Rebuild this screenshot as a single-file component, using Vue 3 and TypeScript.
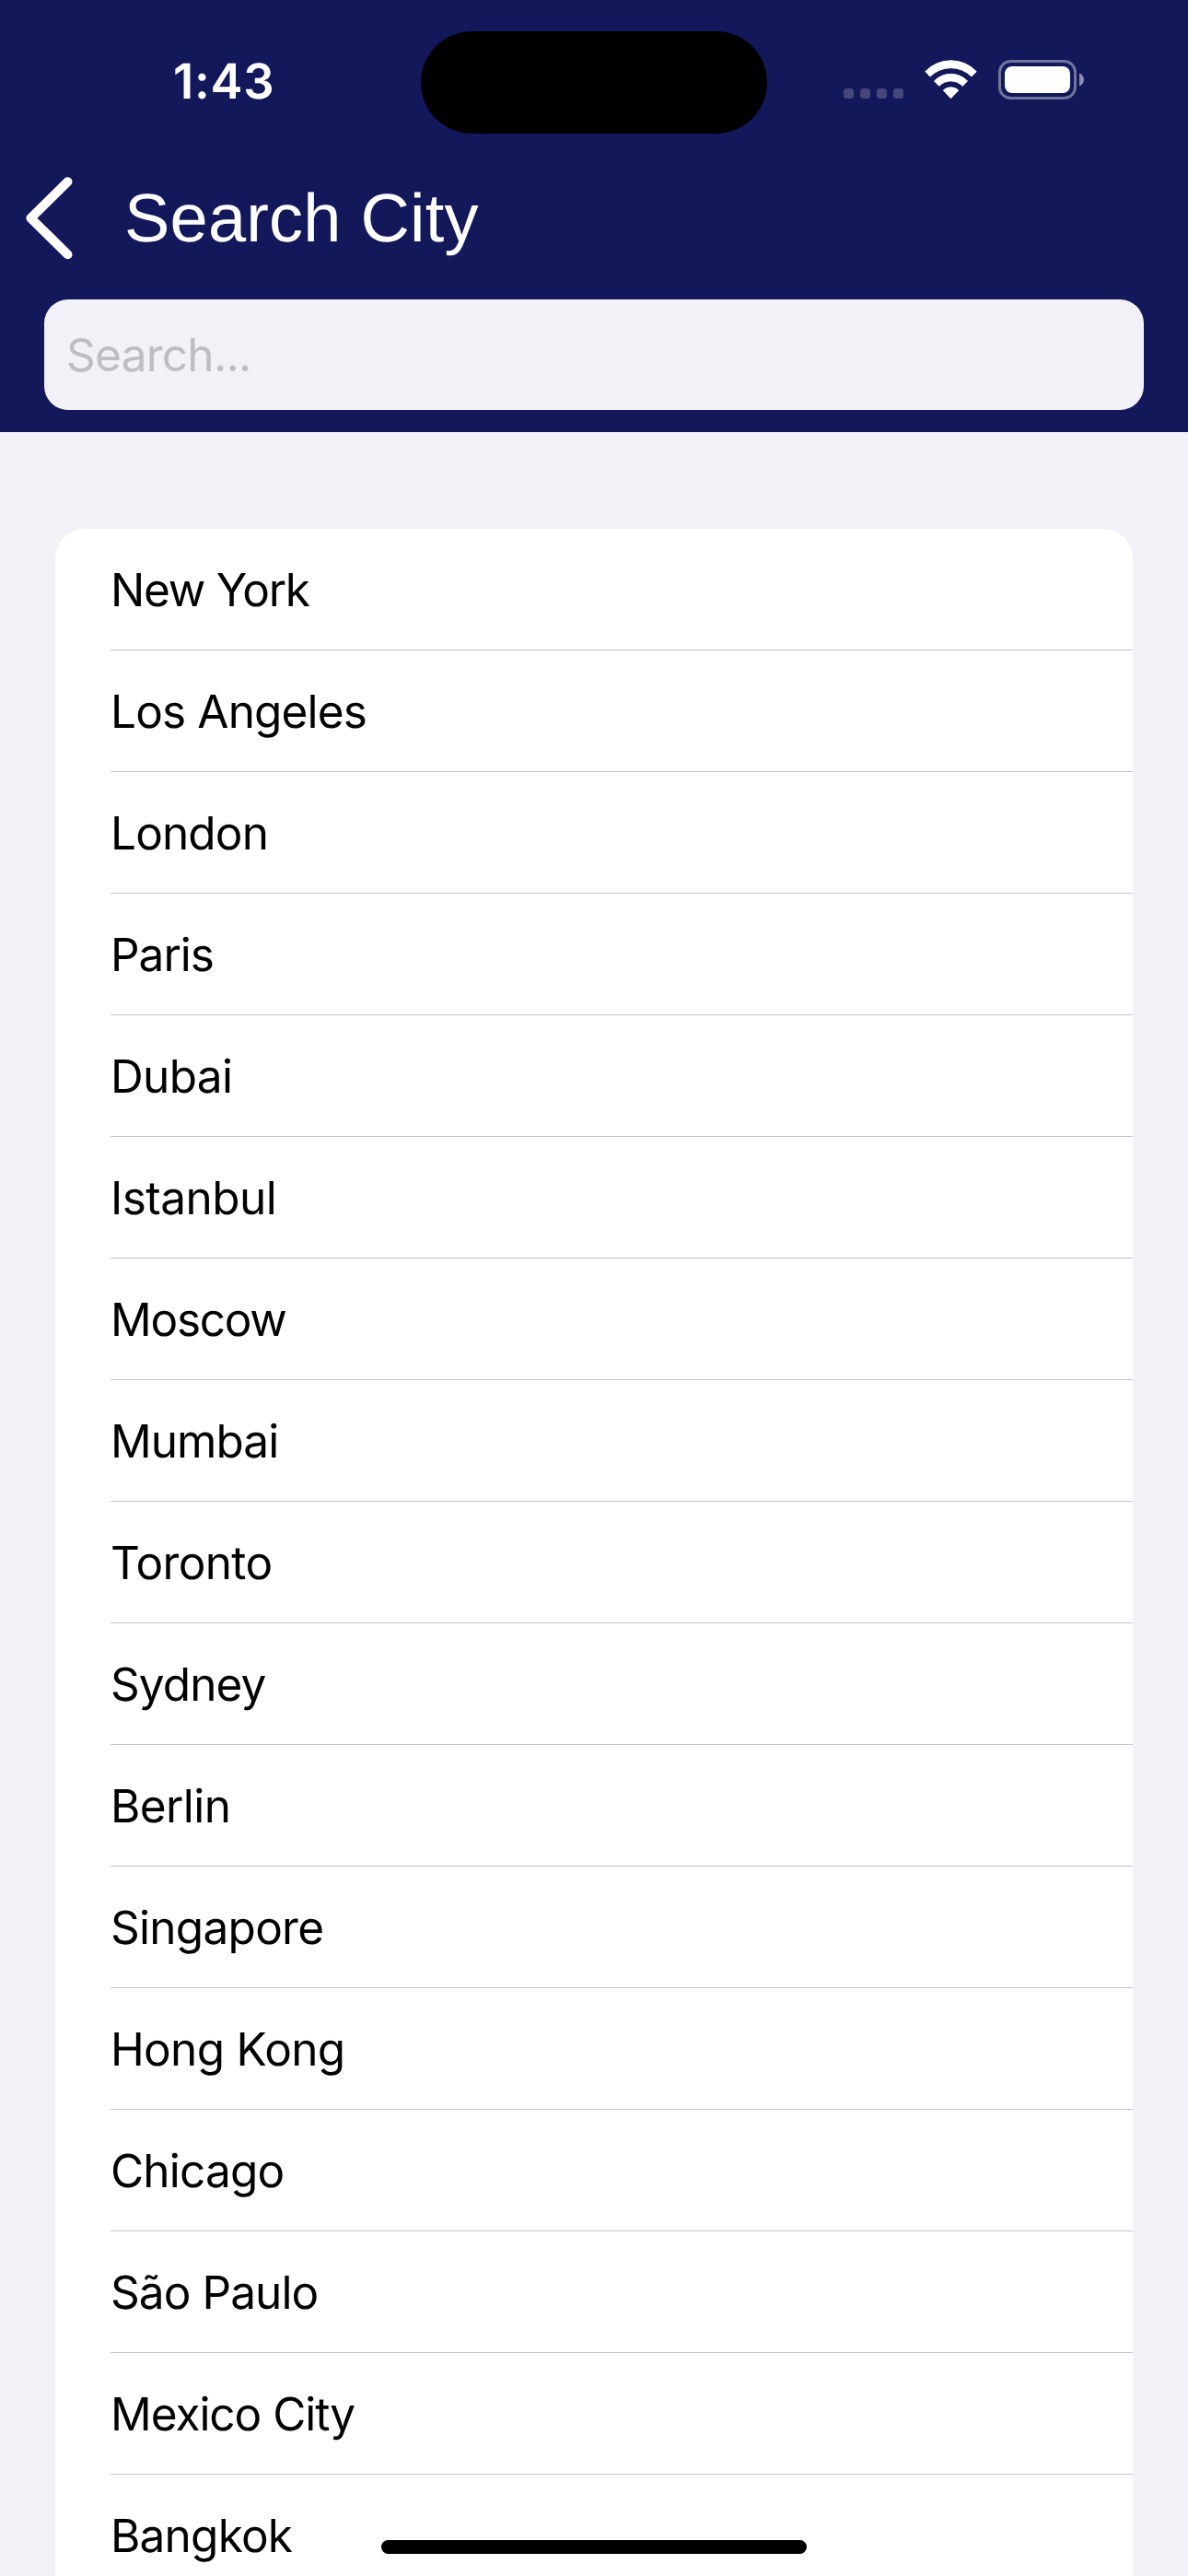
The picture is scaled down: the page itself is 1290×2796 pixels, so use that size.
<script setup lang="ts">
import { ref, computed } from 'vue'

interface City {
  name: string
  tracking: number
}

const query = ref('')

const cities: City[] = [
  { name: 'New York', tracking: -1.25 },
  { name: 'Los Angeles', tracking: -0.84 },
  { name: 'London', tracking: -0.85 },
  { name: 'Paris', tracking: -1 },
  { name: 'Dubai', tracking: -0.65 },
  { name: 'Istanbul', tracking: -0.53 },
  { name: 'Moscow', tracking: -1.25 },
  { name: 'Mumbai', tracking: -0.95 },
  { name: 'Toronto', tracking: -0.64 },
  { name: 'Sydney', tracking: -0.9 },
  { name: 'Berlin', tracking: -0.6 },
  { name: 'Singapore', tracking: -0.72 },
  { name: 'Hong Kong', tracking: -0.68 },
  { name: 'Chicago', tracking: -0.8 },
  { name: 'São Paulo', tracking: -0.92 },
  { name: 'Mexico City', tracking: -1.03 },
  { name: 'Bangkok', tracking: -0.78 },
]

const visibleCities = computed(() =>
  cities.filter((c) => c.name.toLowerCase().includes(query.value.toLowerCase())),
)
</script>

<template>
  <div class="screen">
    <header class="header">
      <div class="status">
        <span class="time">1:43</span>
        <div class="indicators">
          <div class="dots"><i v-for="n in 4" :key="n"></i></div>
          <svg class="wifi" width="58" height="43" viewBox="0 0 58 43">
            <g fill="#fff" stroke="#fff" stroke-width="1" stroke-linejoin="round">
              <path d="M0.8 12.6 A38.4 38.4 0 0 1 56.2 12.6 L51 18 A31.8 31.8 0 0 0 6 18 Z" />
              <path d="M10.5 23 A25 25 0 0 1 46.5 23 L41.2 28.3 A17.6 17.6 0 0 0 15.8 28.3 Z" />
              <path d="M20.3 33.1 A11.8 11.8 0 0 1 36.7 33.1 L28.5 41.7 Z" />
            </g>
          </svg>
          <svg class="battery" width="94" height="43" viewBox="0 0 94 43">
            <rect x="1.5" y="1.5" width="82" height="40" rx="12" fill="none" stroke="#fff" stroke-opacity="0.4" stroke-width="3" />
            <rect x="7" y="7" width="71" height="29" rx="8" fill="#fff" />
            <path d="M88 14.5 C91 15.6 93 18.3 93 21.5 C93 24.7 91 27.4 88 28.5 Z" fill="#fff" fill-opacity="0.5" />
          </svg>
        </div>
        <div class="island"></div>
      </div>
      <div class="nav">
        <button class="back" type="button" aria-label="Back">
          <svg width="52" height="90" viewBox="0 0 52 90">
            <path d="M45.5 5.2 L5.4 44.7 L45.5 84.2" fill="none" stroke="#fff" stroke-width="10" stroke-linecap="round" stroke-linejoin="round" />
          </svg>
        </button>
        <h1 class="title">Search City</h1>
      </div>
      <input v-model="query" class="search" type="text" placeholder="Search..." />
    </header>
    <main class="content">
      <ul class="list">
        <li
          v-for="city in visibleCities"
          :key="city.name"
          class="row"
          :style="{ letterSpacing: city.tracking + 'px' }"
        >{{ city.name }}</li>
      </ul>
    </main>
    <div class="home-indicator"></div>
  </div>
</template>

<style>
body {
  margin: 0;
  background: #f2f1f7;
}
</style>

<style scoped>
.screen {
  position: relative;
  display: flex;
  flex-direction: column;
  width: 1290px;
  height: 2796px;
  overflow: hidden;
  background: #f2f1f7;
  color: #000;
  font-family: Inter, 'Liberation Sans', sans-serif;
  font-size: 49.5px;
  text-rendering: geometricPrecision;
}
.header {
  box-sizing: border-box;
  flex: none;
  height: 469px;
  background: #13185a;
  color: #fff;
}
.status {
  position: relative;
  box-sizing: border-box;
  display: flex;
  justify-content: space-between;
  height: 177px;
  padding: 0 112px 0 188px;
}
.time {
  font-size: 52.5px;
  font-weight: 600;
  line-height: 177px;
  letter-spacing: 0.8px;
}
.indicators {
  display: flex;
  align-items: flex-end;
  height: 108px;
}
.dots {
  display: flex;
  gap: 7px;
  margin: 0 23px 1px 0;
}
.dots i {
  width: 11px;
  height: 11px;
  border-radius: 3.5px;
  background: #45467a;
}
.wifi {
  margin-right: 22px;
}
.island {
  position: absolute;
  top: 33.5px;
  left: 457px;
  width: 376px;
  height: 111px;
  border-radius: 56px;
  background: #000;
}
.nav {
  display: flex;
  align-items: center;
  height: 120px;
  padding-left: 28px;
}
.back {
  display: flex;
  margin: 0 55px 0 0;
  padding: 0;
  border: 0;
  background: none;
}
.title {
  margin: 0;
  font-family: 'Liberation Sans', Helvetica, Arial, sans-serif;
  font-size: 74px;
  font-weight: 400;
  line-height: 120px;
  letter-spacing: 0.2px;
}
.search {
  box-sizing: border-box;
  display: block;
  width: 1194px;
  height: 120px;
  margin: 28px 48px 0;
  padding: 0 24px;
  border: 0;
  outline: 0;
  border-radius: 26px;
  background: #f2f1f7;
  color: #000;
  font: inherit;
  letter-spacing: -0.73px;
}
.search::placeholder {
  color: #bdbdc2;
  opacity: 1;
}
.content {
  padding: 105px 60px 0;
}
.list {
  margin: 0;
  padding: 0 0 0 60px;
  border-radius: 32px 32px 0 0;
  background: #fff;
  list-style: none;
}
.row {
  height: 132px;
  line-height: 132px;
  box-shadow: inset 0 -1px #c5c5c7;
}
.home-indicator {
  position: absolute;
  left: 414px;
  bottom: 24px;
  width: 462px;
  height: 15px;
  border-radius: 8px;
  background: #000;
}
</style>
